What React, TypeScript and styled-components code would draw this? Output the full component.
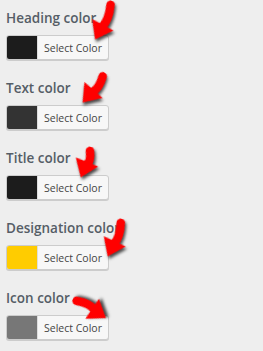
import styled, { createGlobalStyle } from "styled-components";

interface IArrow {
  x: number;
  y: number;
  angle: number;
  len: number;
}

interface IField {
  label: string;
  color: string;
  arrow: IArrow;
}

const GlobalStyle = createGlobalStyle`
  html, body {
    margin: 0;
    padding: 0;
    background: #eeeeee;
  }
  body {
    font-family: "Open Sans", "Liberation Sans", sans-serif;
  }
`;

const Panel = styled.div`
  display: flex;
  flex-direction: column;
  padding: 8px 6px 0;
  width: 263px;
  height: 351px;
  box-sizing: border-box;
  overflow: hidden;
`;

const Field = styled.div`
  position: relative;
  display: flex;
  flex-direction: column;
  align-items: flex-start;
  flex-shrink: 0;
  gap: 7px;
  height: 70px;
`;

const Label = styled.div`
  font-size: 13.5px;
  font-weight: 600;
  line-height: 20px;
  color: #555d66;
`;

const PickerButton = styled.button`
  display: flex;
  align-items: stretch;
  padding: 0;
  width: 103px;
  height: 25px;
  border: 1px solid #cccccc;
  border-radius: 3px;
  background: #f7f7f7;
  box-shadow: 0 1px 0 #cccccc;
  box-sizing: border-box;
  overflow: hidden;
  cursor: pointer;
`;

const Swatch = styled.span<{ swatch: string }>`
  width: 30px;
  background: ${({ swatch }) => swatch};
  border-right: 1px solid #dddddd;
`;

const PickerText = styled.span`
  flex: 1;
  display: flex;
  align-items: center;
  justify-content: center;
  font-family: "Open Sans", "Liberation Sans", sans-serif;
  font-size: 10.5px;
  color: #444444;
`;

const ArrowWrap = styled.div`
  position: absolute;
  width: 26px;
  transform-origin: 13px 0;
  filter: drop-shadow(2px 2px 1.5px rgba(0, 0, 0, 0.7));
  pointer-events: none;
`;

const Arrow = ({ x, y, angle, len }: IArrow) => (
  <ArrowWrap
    style={{
      left: x - 13,
      top: y,
      height: len,
      transform: `rotate(${angle}deg)`,
    }}
  >
    <svg width="26" height={len} viewBox={`0 0 26 ${len}`}>
      <path
        d={`M13 4 Q17 ${len * 0.45} 13 ${len - 14}`}
        stroke="#ff0000"
        strokeWidth="8.5"
        strokeLinecap="round"
        fill="none"
      />
      <path d={`M1 ${len - 18} L25 ${len - 15} L11 ${len} Z`} fill="#ff0000" />
    </svg>
  </ArrowWrap>
);

const fields: IField[] = [
  { label: "Heading color", color: "#1c1c1c", arrow: { x: 106, y: -7, angle: 21, len: 42 } },
  { label: "Text color", color: "#333333", arrow: { x: 99, y: -5, angle: 34, len: 37 } },
  { label: "Title color", color: "#1c1c1c", arrow: { x: 85, y: -1, angle: 15, len: 32 } },
  { label: "Designation color", color: "#ffcc00", arrow: { x: 116, y: 1, angle: 18, len: 40 } },
  { label: "Icon color", color: "#777777", arrow: { x: 67, y: 11, angle: -63, len: 38 } },
];

const App = () => {
  return (
    <>
      <GlobalStyle />
      <Panel>
        {fields.map((f) => (
          <Field key={f.label}>
            <Label>{f.label}</Label>
            <PickerButton>
              <Swatch swatch={f.color} />
              <PickerText>Select Color</PickerText>
            </PickerButton>
            <Arrow {...f.arrow} />
          </Field>
        ))}
      </Panel>
    </>
  );
};

export default App;
